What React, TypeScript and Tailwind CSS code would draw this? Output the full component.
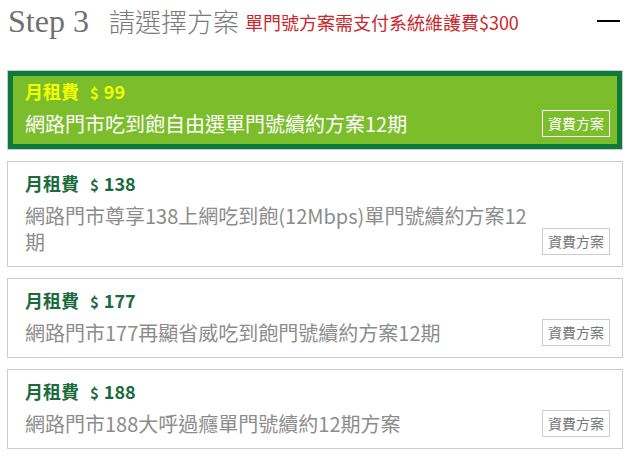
import React from "react";

type Plan = { price: string; desc: string; selected?: boolean };

const plans: Plan[] = [
  { price: "99", desc: "網路門市吃到飽自由選單門號續約方案12期", selected: true },
  { price: "138", desc: "網路門市尊享138上網吃到飽(12Mbps)單門號續約方案12期" },
  { price: "177", desc: "網路門市177再顯省威吃到飽門號續約方案12期" },
  { price: "188", desc: "網路門市188大呼過癮單門號續約12期方案" },
];

function Card({ plan }: { plan: Plan }) {
  const sel = !!plan.selected;
  return (
    <div className="border border-[#cccccc] bg-white">
      <div
        className={
          sel
            ? "border-[5px] border-[#0d7a3b] bg-[#7cbd2b] flex items-end pl-[12px] pr-[7px] pt-[2px] pb-[7px]"
            : "flex items-end pl-[17px] pr-[12px] pt-[8px] pb-[11px]"
        }
      >
        <div className="flex-1 min-w-0 pr-[10px]">
          <div
            className={
              "flex items-baseline font-bold text-[18px] leading-[26px] " +
              (sel ? "text-[#f4ff00]" : "text-[#1b6b3d]")
            }
          >
            <span>月租費</span>
            <span className="ml-[11px] text-[15px]">$</span>
            <span className="ml-[5px]">{plan.price}</span>
          </div>
          <div
            className={
              "mt-[5px] text-[20px] leading-[26px] " +
              (sel ? "text-white" : "text-[#8c8c8c]")
            }
          >
            {plan.desc}
          </div>
        </div>
        <div
          className={
            "shrink-0 h-[27px] px-[5px] flex items-center text-[14px] border " +
            (sel ? "border-white text-white" : "border-[#cccccc] text-[#777777]")
          }
        >
          資費方案
        </div>
      </div>
    </div>
  );
}

export default function App() {
  return (
    <div
      className="w-[636px] h-[462px] bg-white overflow-hidden"
      style={{ fontFamily: '"Noto Sans CJK TC", "Noto Sans", sans-serif' }}
    >
      <div className="flex items-center h-[42px] pl-[8px] pr-[16px]">
        <span className="font-['Liberation_Serif',serif] text-[32px] text-[#707070] leading-none">
          Step 3
        </span>
        <span className="ml-[20px] text-[26px] font-light text-[#7a7a7a] leading-none">
          請選擇方案
        </span>
        <span className="ml-[6px] text-[18px] text-[#c9282d] leading-none mt-[2px]">
          單門號方案需支付系統維護費$300
        </span>
        <span className="ml-auto w-[23px] h-[2px] bg-black" />
      </div>
      <div className="mt-[28px] pl-[7px] pr-[13px] flex flex-col gap-[11px]">
        {plans.map((p) => (
          <Card key={p.price} plan={p} />
        ))}
      </div>
    </div>
  );
}
